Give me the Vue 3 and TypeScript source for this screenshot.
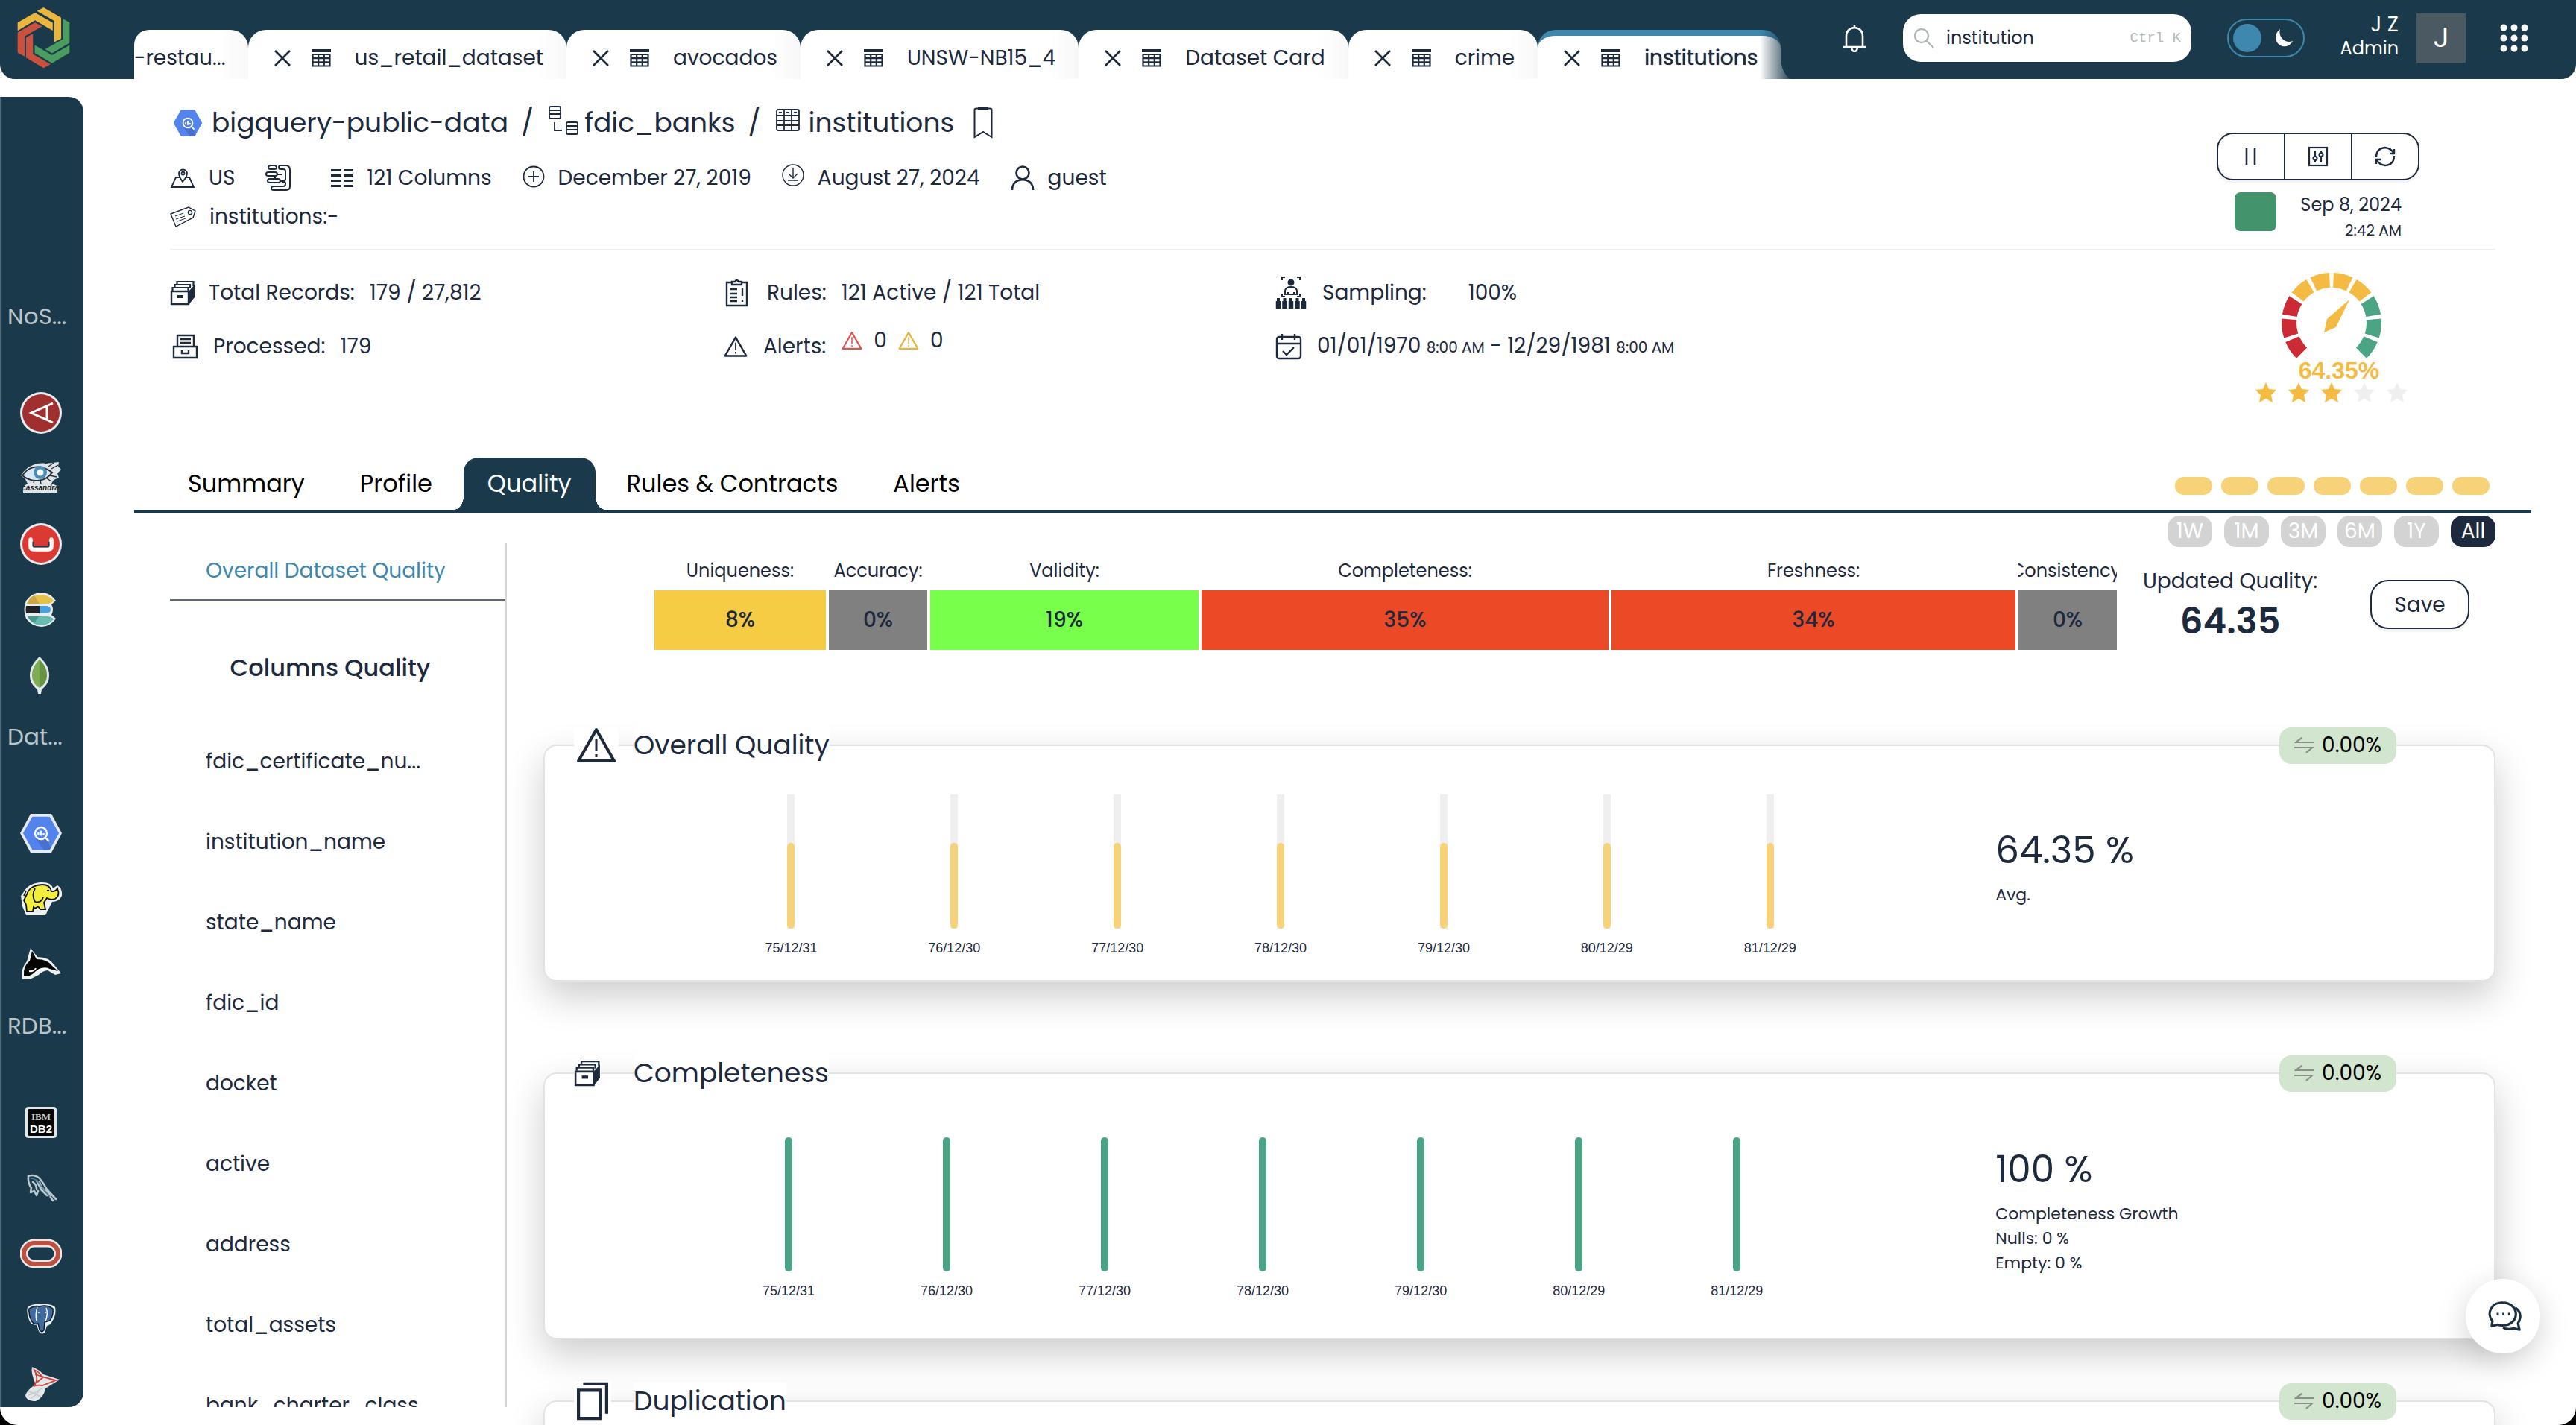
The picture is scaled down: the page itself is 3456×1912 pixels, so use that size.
<script setup lang="ts">
import { ref } from 'vue'

interface OpenTab {
  label: string
  closable: boolean
  active?: boolean
}

interface Mark {
  text: string
  x: number
  y: number
  kind: string
}

interface Weight {
  label: string
  value: number
  color: string
  share: number
}

interface QualityCard {
  title: string
  icon: string
  score: string
  notes: string[]
  fill: number
  color: string
  size: 'short' | 'tall'
  dates: string[]
}

const openTabs: OpenTab[] = [
  { label: '-restau...', closable: false },
  { label: 'us_retail_dataset', closable: true },
  { label: 'avocados', closable: true },
  { label: 'UNSW-NB15_4', closable: true },
  { label: 'Dataset Card', closable: true },
  { label: 'crime', closable: true },
  { label: 'institutions', closable: true, active: true },
]

const sources = [
  { label: 'NoS...', items: ['aerospike', 'cassandra', 'couchbase', 'elastic', 'mongo'] },
  { label: 'Dat...', items: ['bigquery', 'hadoop', 'orca'] },
  { label: 'RDB...', items: ['db2', 'mysql', 'oracle', 'postgres', 'sqlserver'] },
]

const marks: Record<string, Mark[]> = {
  cassandra: [{ text: 'cassandra', x: 27, y: 44, kind: 'mark-cassandra' }],
  db2: [
    { text: 'IBM', x: 28, y: 25, kind: 'mark-ibm' },
    { text: 'DB2', x: 28, y: 42, kind: 'mark-db2' },
  ],
}

const views = ['Summary', 'Profile', 'Quality', 'Rules & Contracts', 'Alerts']
const view = ref('Quality')

const ranges = ['1W', '1M', '3M', '6M', '1Y', 'All']
const range = ref('All')

const columns = [
  'fdic_certificate_nu...',
  'institution_name',
  'state_name',
  'fdic_id',
  'docket',
  'active',
  'address',
  'total_assets',
  'bank_charter_class',
]

const weights: Weight[] = [
  { label: 'Uniqueness:', value: 8, color: '#f7cc45', share: 230 },
  { label: 'Accuracy:', value: 0, color: '#808080', share: 132 },
  { label: 'Validity:', value: 19, color: '#77ff4c', share: 360 },
  { label: 'Completeness:', value: 35, color: '#ec4a27', share: 546 },
  { label: 'Freshness:', value: 34, color: '#ec4a27', share: 542 },
  { label: 'Consistency:', value: 0, color: '#808080', share: 132 },
]

const dates = ['75/12/31', '76/12/30', '77/12/30', '78/12/30', '79/12/30', '80/12/29', '81/12/29']

const cards: QualityCard[] = [
  { title: 'Overall Quality', icon: 'warn', score: '64.35 %', notes: ['Avg.'], fill: 64, color: '#f8d278', size: 'short', dates },
  {
    title: 'Completeness', icon: 'drawers', score: '100 %',
    notes: ['Completeness Growth', 'Nulls: 0 %', 'Empty: 0 %'],
    fill: 100, color: '#4ba585', size: 'tall', dates,
  },
  { title: 'Duplication', icon: 'copies', score: '', notes: [], fill: 0, color: '#4ba585', size: 'tall', dates: [] },
]

const darkMode = ref(false)
const query = ref('institution')

const gaugeColors = ['#cc2b36', '#cc2b36', '#cc2b36', '#f5ba42', '#f5ba42', '#f5ba42', '#f5ba42', '#4ba585', '#4ba585', '#4ba585']

function gaugePoint(deg: number): string {
  const a = (deg * Math.PI) / 180
  return `${(68 + 57 * Math.sin(a)).toFixed(2)} ${(67 - 57 * Math.cos(a)).toFixed(2)}`
}

const gaugeSegments = gaugeColors.map((color, i) => {
  const from = -138 + i * 27.6
  return { color, d: `M${gaugePoint(from + 2.5)} A57 57 0 0 1 ${gaugePoint(from + 25.1)}` }
})
</script>

<template>
  <div class="app">
    <svg class="defs" aria-hidden="true">
      <symbol id="i-close" viewBox="0 0 24 24"><path d="M2 2l20 20M22 2L2 22" fill="none" stroke="#1d293c" stroke-width="2.6" /></symbol>
      <symbol id="i-table" viewBox="0 0 26 24">
        <path d="M0 0h26v4H0z" fill="#1d293c" />
        <path d="M1.5 7h23v15.5h-23zM1.5 12.2h23M1.5 17.4h23M9.2 7v15.5M16.8 7v15.5" fill="none" stroke="#1d293c" stroke-width="2.2" />
      </symbol>
      <symbol id="i-warn" viewBox="0 0 54 48">
        <path d="M27 3L51 45H3z" fill="none" stroke="currentColor" stroke-width="4" stroke-linejoin="round" />
        <path d="M27 15v17M27 36v4" stroke="currentColor" stroke-width="3" />
      </symbol>
      <symbol id="i-drawers" viewBox="0 0 34 34">
        <path d="M2 15h23v17H2z" fill="#fff" stroke="currentColor" stroke-width="2.4" />
        <path d="M25 15l8-9v17l-8 10z" fill="currentColor" />
        <path d="M3.500 14v-4h21v4M6.500 10V6h20.500v5M9.500 6V2h22v6" fill="none" stroke="currentColor" stroke-width="2.2" />
        <path d="M10 20h8v4h-8z" fill="currentColor" />
      </symbol>
      <symbol id="i-copies" viewBox="0 0 40 48">
        <path d="M2 10h28v36H2z" fill="none" stroke="currentColor" stroke-width="4" />
        <path d="M8 2h30v38" fill="none" stroke="currentColor" stroke-width="4" />
      </symbol>
      <symbol id="i-bigquery" viewBox="0 0 56 56">
        <path d="M15 3h26l14 25-14 25H15L1 28z" fill="#5383ec" />
        <path d="M34 34l9 16-2 3H32L20 36z" fill="#4871cf" />
        <circle cx="28" cy="28" r="9" fill="none" stroke="#fff" stroke-width="2.600" />
        <path d="M34 34l6 6M24 27v4M28 24v8M32 28v3" stroke="#fff" stroke-width="2.600" />
      </symbol>

      <symbol id="s-aerospike" viewBox="0 0 56 56">
        <circle cx="28" cy="28" r="28" fill="#e9edef" /><circle cx="28" cy="28" r="25" fill="#a0302f" />
        <path d="M44 15L15 28l29 13M36 19v18" fill="none" stroke="#fff" stroke-width="3" />
      </symbol>
      <symbol id="s-cassandra" viewBox="0 0 56 56">
        <path d="M1 24C8 12 22 6 34 8l18-2-1 6 4 4-5 5 2 6-7 3-3 5 8 3v9H4v-8l6-4-3-6z" fill="#dfe5e8" />
        <path d="M3 24C11 11 28 8 43 20 33 34 15 34 3 24z" fill="#d5e9f8" stroke="#2c2c30" stroke-width="2" />
        <circle cx="27" cy="20" r="9" fill="#4b8fb9" /><circle cx="27" cy="20" r="4.500" fill="#fff" />
        <path d="M33 9l4-3M38 12l7-5M42 15l9-5M40 24l9 2M36 28l6 4M27 31l1 4M19 30l-1 4" stroke="#2c2c30" stroke-width="1.400" />
      </symbol>
      <symbol id="s-couchbase" viewBox="0 0 56 56">
        <circle cx="28" cy="28" r="28" fill="#e9edef" /><circle cx="28" cy="28" r="25" fill="#da3a32" />
        <path d="M14 22v9q0 4 4 4h20q4 0 4-4v-9" fill="none" stroke="#fff" stroke-width="5.500" stroke-linecap="round" />
        <path d="M17.500 25v5q0 1.500 1.500 1.500h18q1.500 0 1.500-1.500v-5" fill="none" stroke="#1a3a4b" stroke-width="2" />
      </symbol>
      <symbol id="s-elastic" viewBox="0 0 56 56">
        <path d="M8 16Q16 5 29 5q11 0 19 11l-6 5q4 7 0 14l6 5q-8 11-19 11-13 0-21-11-5-12 0-24z" fill="#e9edef" />
        <path d="M10 18Q16 8 28 8q10 0 17 8-3 4-9 4H9z" fill="#e8c148" /><path d="M10 18q4-8 9-9l7 11H9z" fill="#cfa646" />
        <path d="M8 23h18v10H8q-1-5 0-10z" fill="#222226" /><path d="M26 23h10q5 1 5 5t-5 5H26z" fill="#4aa1dc" />
        <path d="M10 37h26q6 0 9 4-7 8-17 8-12 0-18-12z" fill="#64bdb0" /><path d="M10 37h15l-6 9q-6-3-9-9z" fill="#459a90" />
      </symbol>
      <symbol id="s-mongo" viewBox="0 0 56 56">
        <path d="M26 3c6 6 13 13 13 25 0 10-5 15-10 19l-1 6h-4l-1-6c-5-4-10-9-10-19C13 16 20 9 26 3z" fill="#e3e8e9" />
        <path d="M26 7c-5 5-10 11-10 21 0 9 5 14 10 17z" fill="#7dac53" /><path d="M26 7c5 5 10 11 10 21 0 9-5 14-10 17z" fill="#669344" />
      </symbol>
      <symbol id="s-bigquery" viewBox="0 0 56 56">
        <path d="M14 2h28l14 26-14 26H14L0 28z" fill="#e4eaf3" />
        <svg x="3" y="3" width="50" height="50"><use href="#i-bigquery" /></svg>
      </symbol>
      <symbol id="s-hadoop" viewBox="0 0 56 56">
        <path d="M4 20C10 8 22 6 30 6q12 0 14 8l6-4q7 4 6 14-4 8-13 8l-5 10-4 8H8L3 38 1 24z" fill="#eef1ee" />
        <path d="M9 22C12 12 22 9 30 9q10 0 12 9 5 1 8-4 4 10-3 14-6 2-11-1l-4 6 2 9h-7l-3-4q-4 4-6 1l-1 6H9l-1-9-3-6z" fill="#f2ef3c" stroke="#111" stroke-width="1.800" />
        <path d="M20 14q-5 9 0 18 8 2 11-6M8 17l-3 7M36 17h3" fill="none" stroke="#111" stroke-width="1.800" />
      </symbol>
      <symbol id="s-orca" viewBox="0 0 56 56">
        <path d="M3 48Q0 34 9 24L14 6l9 12q16 0 23 11l9 11-8 2-10-6q-8 1-12 6l-12 6z" fill="#eef1f2" />
        <path d="M5 43q-1-13 8-20l3-13 6 11q15 0 21 9l8 7q-9-2-14-4-10-2-17 5-8 8-15 5z" fill="#050505" />
        <path d="M12 37q7 1 9-4M20 40q8-8 18-6" stroke="#fff" stroke-width="2" fill="none" />
      </symbol>
      <symbol id="s-db2" viewBox="0 0 56 56">
        <rect x="7" y="7" width="42" height="42" rx="4" fill="#dfe5e8" /><rect x="10" y="10" width="36" height="36" rx="2" fill="#050505" />
      </symbol>
      <symbol id="s-mysql" viewBox="0 0 56 56">
        <path d="M11 12q8-3 15 3 6 7 10 15l12 13M11 12q-1 9 4 16l-1 6 5-2 3 6 2-6M17 20q5 3 5 10M26 20q2 8 10 13l8 12M22 18l6 12 8 8" fill="none" stroke="#b9c8cf" stroke-width="2.600" stroke-linecap="round" stroke-linejoin="round" />
        <path d="M14 15q8 0 14 10l12 15" fill="none" stroke="#4a7d97" stroke-width="1.400" />
      </symbol>
      <symbol id="s-oracle" viewBox="0 0 56 56">
        <rect x="5" y="14" width="46" height="28" rx="14" fill="none" stroke="#e4e9eb" stroke-width="11" />
        <rect x="5" y="14" width="46" height="28" rx="14" fill="none" stroke="#c14f3d" stroke-width="6" />
      </symbol>
      <symbol id="s-postgres" viewBox="0 0 56 56">
        <path d="M10 12Q16 7 28 8q14-1 19 4 2 10-4 19-2 5-7 6l-3 9q-5 4-8-2l-3-8q-8 0-10-7-4-9-2-17z" fill="#e8edf0" />
        <path d="M12 14q8-5 14-3 10-3 18 3 1 9-4 16l-7 2-1 11q-4 4-6-1l-2-8q-6 2-9-4-4-8-3-16z" fill="#3f6a9b" stroke="#0c1824" stroke-width="1.400" />
        <path d="M23 12q-3 9-1 18M35 13q3 8-1 18M26 19h-2M33 19h2" fill="none" stroke="#fff" stroke-width="1.400" />
      </symbol>
      <symbol id="s-sqlserver" viewBox="0 0 56 56">
        <path d="M16 4q10 4 15 10l22 7-19 12q-2 12-13 17Q8 50 7 42q4-9 14-14Q14 12 16 4z" fill="#e3e7e9" />
        <path d="M19 8q7 3 10 9l19 5-18 7q-7-1-12 1 8-9 1-22zM20 14l26 8M22 25l10-8" fill="none" stroke="#cf4038" stroke-width="1.800" />
        <path d="M11 42q8-2 18-9M14 46q8-3 12-12M12 37l16 7" fill="none" stroke="#c2c8cc" stroke-width="1.400" />
      </symbol>
    </svg>

    <header class="topbar">
      <a class="logo" href="#" aria-label="Home">
        <svg viewBox="70 28 214 248" width="71" height="83">
          <g fill="#eab63e">
            <path d="M72 91l70-40 72 41v31l-72-41-70 42z" /><path d="M150 44l27-14 71 41v85l-28 14V84z" />
          </g>
          <g fill="#4a9c5f">
            <path d="M256 76l26 15v82l-71 42-28-16 73-42z" /><path d="M141 182l70 41 71-41v31l-71 42-70-41z" />
          </g>
          <g fill="#cb513f">
            <path d="M72 131l70-40 29 15-71 41v81l-28-15z" /><path d="M106 151l28-15v82l71 42-28 15-71-42z" />
          </g>
        </svg>
      </a>

      <nav class="tabs" aria-label="Open datasets">
        <div v-for="tab in openTabs" :key="tab.label" class="tab" :class="{ active: tab.active, cut: !tab.closable }">
          <button v-if="tab.closable" class="bare" type="button" :aria-label="'Close ' + tab.label">
            <svg width="24" height="24"><use href="#i-close" /></svg>
          </button>
          <svg v-if="tab.closable" class="tab-icon" width="26" height="24"><use href="#i-table" /></svg>
          <a href="#">{{ tab.label }}</a>
        </div>
      </nav>

      <div class="tools">
        <button class="bare" type="button" aria-label="Notifications">
          <svg width="30" height="38" viewBox="0 0 30 38" fill="none" stroke="#fff" stroke-width="2.600">
            <path d="M4 31V17Q4 6 15 5q11 1 11 12v14M0 31h30M11 32q1 5 4 5t4-5M15 1v4" />
          </svg>
        </button>
        <label class="search">
          <svg width="28" height="28" viewBox="0 0 28 28" fill="none" stroke="#aeb9b4" stroke-width="2.400">
            <circle cx="11" cy="11" r="9" /><path d="M17.500 17.500L27 27" />
          </svg>
          <input v-model="query" type="text" aria-label="Search">
          <kbd>Ctrl K</kbd>
        </label>
        <label class="toggle">
          <input v-model="darkMode" type="checkbox" aria-label="Dark mode">
          <span class="knob"></span>
          <svg width="26" height="26" viewBox="0 0 26 26"><path d="M8 1Q2 6 2 12a12 12 0 0 0 23 5Q17 20 11 14 6 8 8 1z" fill="#fff" /></svg>
        </label>
        <div class="user">
          <span class="name">J Z</span>
          <span>Admin</span>
        </div>
        <div class="avatar">J</div>
        <button class="bare" type="button" aria-label="Apps">
          <svg width="38" height="38" viewBox="0 0 38 38" fill="#fff">
            <template v-for="r in 3" :key="r">
              <circle v-for="c in 3" :key="c" :cx="c * 14 - 9" :cy="r * 14 - 9" r="4.500" />
            </template>
          </svg>
        </button>
      </div>
    </header>

    <div class="body">
      <aside class="sidebar">
        <section v-for="group in sources" :key="group.label">
          <h3>{{ group.label }}</h3>
          <button v-for="item in group.items" :key="item" class="source" type="button" :aria-label="item">
            <svg width="56" height="56" viewBox="0 0 56 56">
              <use :href="'#s-' + item" width="56" height="56" />
              <text v-for="m in marks[item]" :key="m.text" :x="m.x" :y="m.y" text-anchor="middle" :class="m.kind">{{ m.text }}</text>
            </svg>
          </button>
        </section>
      </aside>

      <main class="page">
        <section class="head">
          <div class="head-info">
            <h1 class="crumbs">
              <svg width="40" height="40"><use href="#i-bigquery" /></svg>
              <a href="#" class="c1">bigquery-public-data</a>
              <span class="slash">/</span>
              <svg class="up" width="40" height="40" viewBox="1 0 40 40" fill="none" stroke="#1d293c" stroke-width="1.800">
                <rect x="2" y="1" width="15" height="16" rx="2" /><path d="M2 6h15M2 11h15M9 22v11h10" />
                <rect x="25" y="22" width="15" height="16" rx="2" /><path d="M25 27h15M25 32h15" />
              </svg>
              <a href="#" class="c2">fdic_banks</a>
              <span class="slash">/</span>
              <svg class="up" width="32" height="38" viewBox="0 -4 32 38" fill="none" stroke="#1d293c" stroke-width="1.800">
                <rect x="1" y="1" width="30" height="28" rx="2" /><path d="M1 9h30M1 16h30M1 22h30M11 1v28M21 1v28" />
                <path d="M4 5h4M14 5h4M24 5h4" />
              </svg>
              <a href="#" class="c3">institutions</a>
              <button class="bare" type="button" aria-label="Bookmark">
                <svg width="26" height="42" viewBox="0 0 26 42" fill="none" stroke="#1d293c" stroke-width="2">
                  <path d="M1.500 3Q1.500 1.500 4 1.500h18Q24.500 1.500 24.500 3v37L13 33 1.500 40z" /><path d="M6 1.500h14" stroke-width="3" />
                </svg>
              </button>
            </h1>

            <ul class="meta">
              <li>
                <svg width="34" height="27" viewBox="-1 0 34 27" fill="none" stroke="#1d293c" stroke-width="1.800">
                  <path d="M13 12H7L1 25h30l-6-13h-5M16 18q-5-7-5-11a5.500 5.500 0 0 1 11 0q0 4-6 11z" /><circle cx="16.500" cy="6.500" r="2" />
                </svg>
                <span>US</span>
              </li>
              <li class="schema">
                <svg width="34" height="36" viewBox="0 0 34 36" fill="none" stroke="#1d293c" stroke-width="2">
                  <path d="M7 1h5q3 0 3 2.500T12 6H7Q4 6 4 3.500T7 1z" /><path d="M20 1h7q6 0 6 6v22q0 5-5 5H11q-3 0-3-2.500T11 29h13q3 0 3-3v-1q0-2-2-2h-2" />
                  <path d="M20 1q-2 0-2 2.500T20 6h4q3 0 3 3v10q0 3-3 3h-4" />
                  <path d="M4 10h9q3 0 3 2.500T13 15H4q-3 0-3-2.500T4 10zM16 13h6M13 15v4" />
                  <path d="M6 19h11q3 0 3 2.500T17 24H6q-3 0-3-2.500T6 19z" />
                </svg>
              </li>
              <li>
                <svg width="30" height="26" viewBox="0 0 30 26" fill="#1d293c">
                  <path d="M0 1h13v3H0zM17 1h13v3H17zM0 8h13v3H0zM17 8h13v3H17zM0 15h13v3H0zM17 15h13v3H17zM0 22h13v3H0zM17 22h13v3H17z" />
                </svg>
                <span>121 Columns</span>
              </li>
              <li>
                <svg width="30" height="34" viewBox="0 0 30 34" fill="none" stroke="#1d293c" stroke-width="1.800">
                  <circle cx="15" cy="15" r="13.500" /><path d="M15 8v14M8 15h14" />
                </svg>
                <span>December 27, 2019</span>
              </li>
              <li>
                <svg width="30" height="38" viewBox="0 0 30 38" fill="none" stroke="#1d293c" stroke-width="1.400">
                  <circle cx="15" cy="15" r="14" /><path d="M15 5v13M9 13l6 6 6-6M8 22h14" />
                </svg>
                <span>August 27, 2024</span>
              </li>
              <li>
                <svg width="32" height="34" viewBox="0 0 32 34" fill="none" stroke="#1d293c" stroke-width="2.600">
                  <circle cx="16" cy="10" r="8.500" /><path d="M2 33q0-13 14-14 14 1 14 14" />
                </svg>
                <span>guest</span>
              </li>
            </ul>
            <p class="meta">
              <svg width="36" height="28" viewBox="0 0 36 28" fill="none" stroke="#1d293c" stroke-width="1.400">
                <path d="M1 10L25 1l9 5-3 9L8 27z" /><circle cx="27" cy="8" r="2.600" /><path d="M7 13l11-4M8 17l12-4M10 20l11-4" stroke-width="1" />
              </svg>
              <span>institutions:-</span>
            </p>
          </div>

          <div class="head-side">
            <div class="actions">
              <button type="button" aria-label="Pause"><svg width="26" height="26" viewBox="0 0 26 26"><path d="M7 2v22M18 2v22" stroke="#1d293c" stroke-width="2.600" /></svg></button>
              <button type="button" aria-label="Settings">
                <svg width="28" height="28" viewBox="0 0 28 28" fill="none" stroke="#1d293c" stroke-width="2.200">
                  <rect x="2" y="2" width="24" height="24" /><path d="M10 6v8M10 19v3M18 6v3M18 14v8" /><circle cx="10" cy="16.500" r="2.500" /><circle cx="18" cy="11.500" r="2.500" />
                </svg>
              </button>
              <button type="button" aria-label="Refresh">
                <svg width="30" height="28" viewBox="0 0 30 28" fill="none" stroke="#1d293c" stroke-width="2.400">
                  <path d="M3 15Q3 3 15 2q8 1 11 7M27 13q0 12-12 13-8-1-11-7" /><path d="M27 4v6h-6M3 24v-6h6" />
                </svg>
              </button>
            </div>
            <div class="run">
              <span class="status"></span>
              <p>Sep 8, 2024<small>2:42 AM</small></p>
            </div>
          </div>
        </section>

        <section class="stats">
          <div class="stat-grid">
            <p><svg width="34" height="34"><use href="#i-drawers" /></svg><span class="k">Total Records:</span><span>179 / 27,812</span></p>
            <p>
              <svg width="34" height="38" viewBox="0 0 34 38" fill="none" stroke="#1d293c" stroke-width="2.400">
                <path d="M11 5H4v31h27V5h-7M11 8V4h4q2-4 5 0h4v4z" /><path d="M8 14h10M8 20h10M8 25h10M8 30h10M25 13v10M25 28v3" />
              </svg>
              <span class="k wide">Rules:</span><span>121 Active / 121 Total</span>
            </p>
            <p>
              <svg width="45" height="44" viewBox="0 0 45 44" fill="none" stroke="#1d293c" stroke-width="2">
                <path d="M9 5V1h4M29 1h4v4M9 23v4h4M33 23v4h-4M13 24v-5q1-5 8-5t8 5v5zM17 21v3M25 21v3" /><circle cx="21" cy="8" r="3.500" fill="#1d293c" />
                <path d="M4 33v10M12.500 33v10M21 33v10M29.500 33v10M38 33v10" stroke-width="6.500" />
                <path d="M4 29v5M12.500 29v5M21 29v5M29.500 29v5M38 29v5" stroke-width="4" />
              </svg>
              <span class="k">Sampling:</span><span class="pushed">100%</span>
            </p>
            <p>
              <svg class="nudge" width="34" height="34" viewBox="0 0 34 34" fill="none" stroke="#1d293c" stroke-width="2.400">
                <path d="M7 16V2h22v14" /><path d="M2 17h31v15H2z" /><path d="M11 7h14M11 12h14M13 22v4h9v-4" />
              </svg>
              <span class="k">Processed:</span><span>179</span>
            </p>
            <p class="alerts">
              <svg width="32" height="30" color="#1d293c"><use href="#i-warn" /></svg>
              <span class="k">Alerts:</span>
              <span class="counts">
                <svg width="28" height="26" color="#dc5552"><use href="#i-warn" /></svg>0
                <svg width="28" height="26" color="#e6b442"><use href="#i-warn" /></svg>0
              </span>
            </p>
            <p>
              <svg width="36" height="36" viewBox="0 0 36 36" fill="none" stroke="#1d293c" stroke-width="2.400">
                <rect x="2" y="5" width="32" height="29" rx="3" /><path d="M2 14h32M9 1v8M26 1v8M10 24l5 5 10-10" />
              </svg>
              <span class="period">01/01/1970 <small>8:00 AM</small> - 12/29/1981 <small>8:00 AM</small></span>
            </p>
          </div>
          <div class="gauge">
            <svg width="136" height="115" viewBox="0 0 136 115">
              <path v-for="(seg, i) in gaugeSegments" :key="i" :d="seg.d" :stroke="seg.color" stroke-width="20" fill="none" />
              <path d="M92 36L62 62l-4 18 16-7z" fill="#f5ba42" />
            </svg>
            <strong>64.35%</strong>
            <div class="stars">
              <svg v-for="n in 5" :key="n" width="28" height="27" viewBox="0 0 28 27">
                <path d="M14 0l4 9 10 1-7 7 2 10-9-5-9 5 2-10-7-7 10-1z" :fill="n <= 3 ? '#f5ba42' : '#efefef'" />
              </svg>
            </div>
          </div>
        </section>

        <nav class="views">
          <a v-for="v in views" :key="v" href="#" :class="{ active: v === view }" @click.prevent="view = v">{{ v }}</a>
          <div class="history"><i v-for="n in 7" :key="n"></i></div>
        </nav>

        <div class="panes">
          <aside class="columns">
            <a class="overall" href="#">Overall Dataset Quality</a>
            <h2>Columns Quality</h2>
            <ul>
              <li v-for="c in columns" :key="c"><a href="#">{{ c }}</a></li>
            </ul>
          </aside>

          <section class="quality">
            <div class="ranges">
              <button v-for="r in ranges" :key="r" type="button" :class="{ active: r === range }" @click="range = r">{{ r }}</button>
            </div>

            <div class="weights">
              <div class="bars">
                <div v-for="w in weights" :key="w.label" class="weight" :style="{ flexGrow: w.share }">
                  <span class="wlabel">{{ w.label }}</span>
                  <span class="wvalue" :style="{ background: w.color }">{{ w.value }}%</span>
                </div>
              </div>
              <div class="updated"><span>Updated Quality:</span><strong>64.35</strong></div>
              <button class="save" type="button">Save</button>
            </div>

            <div v-for="card in cards" :key="card.title" class="slot">
              <article class="card" :class="card.size">
                <header>
                  <span class="card-icon" :class="card.icon"><svg><use :href="'#i-' + card.icon" /></svg></span>
                  <h2>{{ card.title }}</h2>
                  <span class="delta">
                    <svg width="26" height="22" viewBox="0 0 26 22" fill="none" stroke="#8a8f8a" stroke-width="2.200"><path d="M26 7H2l8-6M0 14h24l-8 7" /></svg>
                    0.00%
                  </span>
                </header>
                <div class="card-body">
                  <div class="chart">
                    <div v-for="d in card.dates" :key="d" class="point">
                      <div class="track"><i :style="{ height: card.fill + '%', background: card.color }"></i></div>
                      <span>{{ d }}</span>
                    </div>
                  </div>
                  <div class="summary">
                    <strong>{{ card.score }}</strong>
                    <p v-for="n in card.notes" :key="n">{{ n }}</p>
                  </div>
                </div>
              </article>
            </div>
          </section>
        </div>
      </main>
    </div>

    <button class="chat" type="button" aria-label="Chat">
      <svg width="46" height="42" viewBox="0 0 48 44" fill="none" stroke="#1a2f40" stroke-width="3.400" stroke-linejoin="round">
        <path d="M21 3a18 16 0 0 1 0 32q-5 0-8-1l-8 2 1-7a17 16 0 0 1 15-26z" />
        <path d="M38 10q8 5 7 14-1 5-3 8l2 9-8-2q-8 3-15-1" />
        <path d="M12 19h3M20 19h3M28 19h3" stroke-width="3.600" />
      </svg>
    </button>
  </div>
</template>

<style>
body {
  background: #000;
}
</style>

<style scoped>
* {
  box-sizing: border-box;
}
.app {
  --navy: #1a3a4b;
  --ink: #1d293c;
  --blue: #3e87ad;
  position: relative;
  display: flex;
  flex-direction: column;
  height: 100vh;
  overflow: hidden;
  border-radius: 0 0 24px 24px;
  background: #fff;
  color: var(--ink);
  font-family: Poppins, Inter, "Liberation Sans", sans-serif;
  font-size: 28px;
  line-height: 36px;
}
.defs {
  position: absolute;
  width: 0;
  height: 0;
}
h1, h2, h3, p, ul {
  margin: 0;
  padding: 0;
  font-weight: 400;
}
ul {
  list-style: none;
}
a {
  color: inherit;
  text-decoration: none;
}
svg {
  display: block;
  flex: none;
}
button, input {
  font: inherit;
  color: inherit;
}
.bare {
  display: flex;
  padding: 0;
  border: 0;
  background: none;
}
.mark-cassandra {
  font: italic bold 10px "Liberation Sans", sans-serif;
  fill: #222;
}
.mark-ibm {
  font: bold 13px "Liberation Serif", serif;
  fill: #c8c8c8;
}
.mark-db2 {
  font: bold 15px "Liberation Sans", sans-serif;
  fill: #fff;
}

.topbar {
  flex: none;
  display: flex;
  height: 106px;
  border-radius: 0 0 20px 20px;
  background: var(--navy);
}
.logo {
  flex: none;
  width: 180px;
  padding: 9px 0 0 23px;
}
.tabs {
  display: flex;
  flex: 1;
  padding-top: 40px;
  min-width: 0;
}
.tab {
  position: relative;
  display: flex;
  align-items: center;
  padding: 10px 31px 0 34px;
  border-radius: 24px 24px 0 0;
  background: linear-gradient(to left, #f8f8f8, #fff 40px);
  white-space: nowrap;
}
.tab.cut {
  padding-left: 0;
  padding-right: 30px;
  border-top-left-radius: 20px;
}
.tab-icon {
  margin: 0 32px 0 27px;
}
.tab.active {
  padding-top: 2px;
  border-top: 8px solid var(--blue);
  background: #fff;
  text-shadow: 0 0 1px var(--ink);
}
.tab.active::before {
  content: "";
  position: absolute;
  left: 100%;
  bottom: 0;
  width: 16px;
  height: 30px;
  background: radial-gradient(ellipse 16px 30px at 100% 0, var(--navy) 98%, #fff);
}
.tab.active::after {
  content: "";
  position: absolute;
  top: -8px;
  right: -16px;
  bottom: 0;
  width: 44px;
  background: linear-gradient(to right, transparent, var(--navy));
}
.tools {
  display: flex;
  align-items: center;
  padding: 0 64px 4px 0;
}
.search {
  display: flex;
  align-items: center;
  width: 387px;
  height: 64px;
  margin: 0 48px 0 50px;
  padding: 0 14px;
  border-radius: 24px;
  background: #fff;
}
.search input {
  flex: 1;
  min-width: 0;
  margin-left: 16px;
  padding: 0;
  border: 0;
  outline: 0;
  background: none;
  font-size: 24px;
}
.search kbd {
  color: #b0bbb5;
  font: 19px "Liberation Mono", monospace;
}
.toggle {
  position: relative;
  display: flex;
  align-items: center;
  justify-content: space-between;
  width: 104px;
  height: 52px;
  padding: 0 13px 0 6px;
  border: 2px solid var(--blue);
  border-radius: 26px;
}
.toggle input {
  position: absolute;
  inset: 0;
  margin: 0;
  opacity: 0;
}
.knob {
  width: 38px;
  height: 38px;
  border-radius: 50%;
  background: var(--blue);
}
.user {
  display: flex;
  flex-direction: column;
  width: 126px;
  padding-bottom: 4px;
  color: #fff;
  font-size: 24px;
  line-height: 32px;
  text-align: right;
}
.name {
  font-size: 28px;
}
.avatar {
  width: 66px;
  height: 66px;
  margin: 0 46px 0 24px;
  background: #4b5a62;
  color: #fff;
  font: 36px/66px Roboto, sans-serif;
  text-align: center;
}

.body {
  display: flex;
  flex: 1;
  min-height: 0;
  padding-bottom: 24px;
}
.sidebar {
  flex: none;
  width: 112px;
  margin-top: 24px;
  padding-top: 256px;
  overflow: hidden;
  border-left: 2px solid #4a6875;
  border-radius: 0 20px 20px 0;
  background: var(--navy);
}
.sidebar h3 {
  height: 44px;
  margin: 16px 0 64px;
  padding-left: 8px;
  color: #b9c3c8;
  font-size: 31px;
  line-height: 44px;
}
.source {
  display: flex;
  align-items: center;
  height: 88px;
  padding: 0 0 0 25px;
  border: 0;
  background: none;
}

.page {
  flex: 1;
  min-width: 0;
  margin: 0 60px 0 68px;
  min-height: 0;
  display: flex;
  flex-direction: column;
}
.head {
  display: flex;
  flex: none;
  justify-content: space-between;
  margin: 0 48px;
  padding: 30px 0 8px;
  border-bottom: 2px solid #eee;
}
.crumbs {
  display: flex;
  align-items: center;
  height: 58px;
  margin-bottom: 19px;
  padding-left: 4px;
  font-size: 36px;
  line-height: 60px;
}
.up {
  align-self: flex-start;
  margin-top: 6px;
}
.c1 {
  margin: 0 17px 0 12px;
}
.c2 {
  margin: 0 17px 0 8px;
}
.c3 {
  margin: 0 26px 0 12px;
}
.slash {
  margin-right: 20px;
}
.meta {
  display: flex;
  height: 52px;
  align-items: center;
  gap: 41px;
}
.meta li {
  display: flex;
  align-items: center;
  gap: 18px;
}
p.meta {
  gap: 17px;
}
.schema {
  margin-right: 13px;
}
.head-side {
  width: 272px;
  margin: 42px 102px 0 0;
}
.actions {
  display: flex;
  height: 64px;
  overflow: hidden;
  border: 2px solid var(--ink);
  border-radius: 22px;
  box-shadow: 0 4px 2px #f4f4f5;
}
.actions button {
  display: flex;
  flex: 1;
  align-items: center;
  justify-content: center;
  border: 0;
  background: none;
}
.actions button + button {
  border-left: 2px solid var(--ink);
}
.run {
  display: flex;
  justify-content: space-between;
  margin: 16px 24px 0;
}
.status {
  width: 56px;
  height: 52px;
  border-radius: 8px;
  background: #43936c;
}
.run p {
  font-size: 24px;
  line-height: 34px;
  text-align: right;
}
.run small {
  display: block;
  font-size: 20px;
}

.stats {
  display: flex;
  flex: none;
  height: 278px;
  margin: 0 48px;
}
.stat-grid {
  display: grid;
  flex: 1;
  grid-template-columns: 743fr 740fr 1309fr;
  grid-auto-rows: 72px;
  padding-top: 21px;
}
.stat-grid p {
  display: flex;
  align-items: center;
  white-space: nowrap;
}
.k {
  margin: 0 20px 0 18px;
}
.k.wide {
  margin-left: 24px;
}
.alerts .k {
  margin: 0 21px;
}
.nudge {
  margin: 0 3px;
}
.pushed {
  margin-left: 36px;
}
.counts {
  display: flex;
  align-self: flex-start;
  align-items: center;
  gap: 15px;
  margin-top: 10px;
}
.period {
  margin-left: 20px;
}
.period small {
  font-size: 20px;
}
.gauge {
  display: flex;
  flex-direction: column;
  align-items: center;
  width: 216px;
  margin: 30px 112px 0 0;
}
.gauge strong {
  padding-left: 20px;
  color: #f5ba42;
  font: bold 32px/32px "Liberation Sans", sans-serif;
}
.stars {
  display: flex;
  gap: 16px;
}

.views {
  display: flex;
  flex: none;
  gap: 10px;
  height: 74px;
  padding-left: 40px;
  border-bottom: 4px solid var(--navy);
  color: #000;
  font-size: 32px;
  line-height: 70px;
}
.views a {
  position: relative;
  padding: 0 32px;
}
.views .active {
  border-radius: 20px 20px 0 0;
  background: var(--navy);
  color: #fff;
}
.views .active::before,
.views .active::after {
  content: "";
  position: absolute;
  bottom: 0;
  width: 13px;
  height: 18px;
}
.views .active::before {
  right: 100%;
  background: radial-gradient(ellipse 13px 18px at 0 0, transparent 98%, var(--navy));
}
.views .active::after {
  left: 100%;
  background: radial-gradient(ellipse 13px 18px at 100% 0, transparent 98%, var(--navy));
}
.history {
  display: flex;
  align-items: center;
  gap: 12px;
  height: 76px;
  margin: 0 56px 0 auto;
}
.history i {
  width: 50px;
  height: 24px;
  border-radius: 12px;
  background: #f8d278;
}

.panes {
  display: flex;
  flex: 1;
  gap: 49px;
  min-height: 0;
  margin: 0 48px;
}
.columns {
  flex: none;
  width: 452px;
  margin-top: 40px;
  overflow: hidden;
  border-right: 2px solid #d5d5d5;
}
.overall {
  display: block;
  height: 78px;
  padding-left: 48px;
  border-bottom: 2px solid #5f6877;
  color: var(--blue);
  line-height: 76px;
}
.columns h2 {
  margin-bottom: 50px;
  padding: 64px 20px 0 0;
  font-size: 32px;
  font-weight: 500;
  line-height: 52px;
  text-align: center;
}
.columns li {
  height: 108px;
  padding-left: 48px;
  line-height: 100px;
}

.quality {
  flex: 1;
  min-width: 0;
}
.ranges {
  display: flex;
  justify-content: flex-end;
  gap: 16px;
  padding-top: 4px;
}
.ranges button {
  width: 60px;
  height: 42px;
  padding: 0;
  border: 0;
  border-radius: 16px;
  background: #d3d3d3;
  color: #fff;
}
.ranges .active {
  background: var(--ink);
}
.weights {
  display: flex;
  height: 265px;
  padding: 14px 35px 0 149px;
}
.bars {
  display: flex;
  flex: 1;
  gap: 4px;
}
.weight {
  display: flex;
  flex-direction: column;
  flex-basis: 0;
  min-width: 0;
  overflow: hidden;
  text-align: center;
}
.wlabel {
  display: flex;
  justify-content: center;
  height: 44px;
  font-size: 24px;
  line-height: 36px;
}
.wvalue {
  height: 80px;
  font-size: 28px;
  font-weight: 500;
  line-height: 80px;
}
.updated {
  display: flex;
  flex-direction: column;
  align-items: center;
  width: 232px;
  margin: 14px 72px 0 36px;
  white-space: nowrap;
}
.updated strong {
  margin-top: 6px;
  font-size: 48px;
  font-weight: 600;
  line-height: 60px;
}
.save {
  width: 133px;
  height: 66px;
  margin-top: 30px;
  padding: 2px 0 0;
  border: 2px solid var(--ink);
  border-radius: 24px;
  background: #fff;
  box-shadow: 0 4px 2px #f4f4f5;
}

.slot {
  height: 440px;
}
.card {
  height: 358px;
  border: 2px solid #e3e3e3;
  border-radius: 18px;
  background: #fff;
  box-shadow: 0 20px 50px rgba(0, 0, 0, 0.2);
}
.card.short {
  height: 318px;
}
.card header {
  display: flex;
  align-items: center;
  height: 50px;
  margin-top: -26px;
  padding: 0 131px 0 39px;
}
.card-icon {
  display: flex;
  flex: none;
  width: 80px;
}
.card-icon svg {
  width: 60px;
  height: 48px;
  padding: 0 3px;
  background: #fff;
}
.card-icon.drawers svg {
  width: 36px;
  height: 36px;
  padding: 0;
}
.card-icon.copies svg {
  width: 50px;
  height: 54px;
  padding: 0 4px;
}
.card h2 {
  background: #fff;
  font-size: 36px;
  line-height: 50px;
}
.delta {
  display: flex;
  align-items: center;
  justify-content: center;
  gap: 11px;
  width: 157px;
  height: 49px;
  margin-left: auto;
  border-radius: 16px;
  background: #d2e5ce;
  color: #000;
}
.card-body {
  display: flex;
  padding: 41px 0 0 221px;
}
.tall .card-body {
  padding-top: 61px;
}
.chart {
  display: flex;
  flex: none;
  width: 64%;
}
.tall .chart {
  width: 62%;
}
.point {
  display: flex;
  flex: 1;
  flex-direction: column;
  align-items: center;
  font: 18px/20px "Liberation Sans", sans-serif;
}
.track {
  display: flex;
  align-items: flex-end;
  width: 10px;
  height: 180px;
  margin-bottom: 16px;
  background: #efefef;
}
.track i {
  width: 100%;
  border-radius: 5px;
}
.summary {
  margin: 42px 0 0 193px;
  font-size: 22px;
  line-height: 33px;
}
.tall .summary {
  margin: 10px 0 0 241px;
}
.summary strong {
  display: block;
  margin-bottom: 10px;
  font-size: 50px;
  font-weight: 400;
  line-height: 66px;
}

.chat {
  position: absolute;
  right: 48px;
  bottom: 96px;
  display: flex;
  align-items: center;
  justify-content: center;
  width: 100px;
  height: 100px;
  padding: 0 0 0 6px;
  border: 0;
  border-radius: 50%;
  background: #fff;
  box-shadow: 0 12px 40px rgba(0, 0, 0, 0.18);
}
</style>
